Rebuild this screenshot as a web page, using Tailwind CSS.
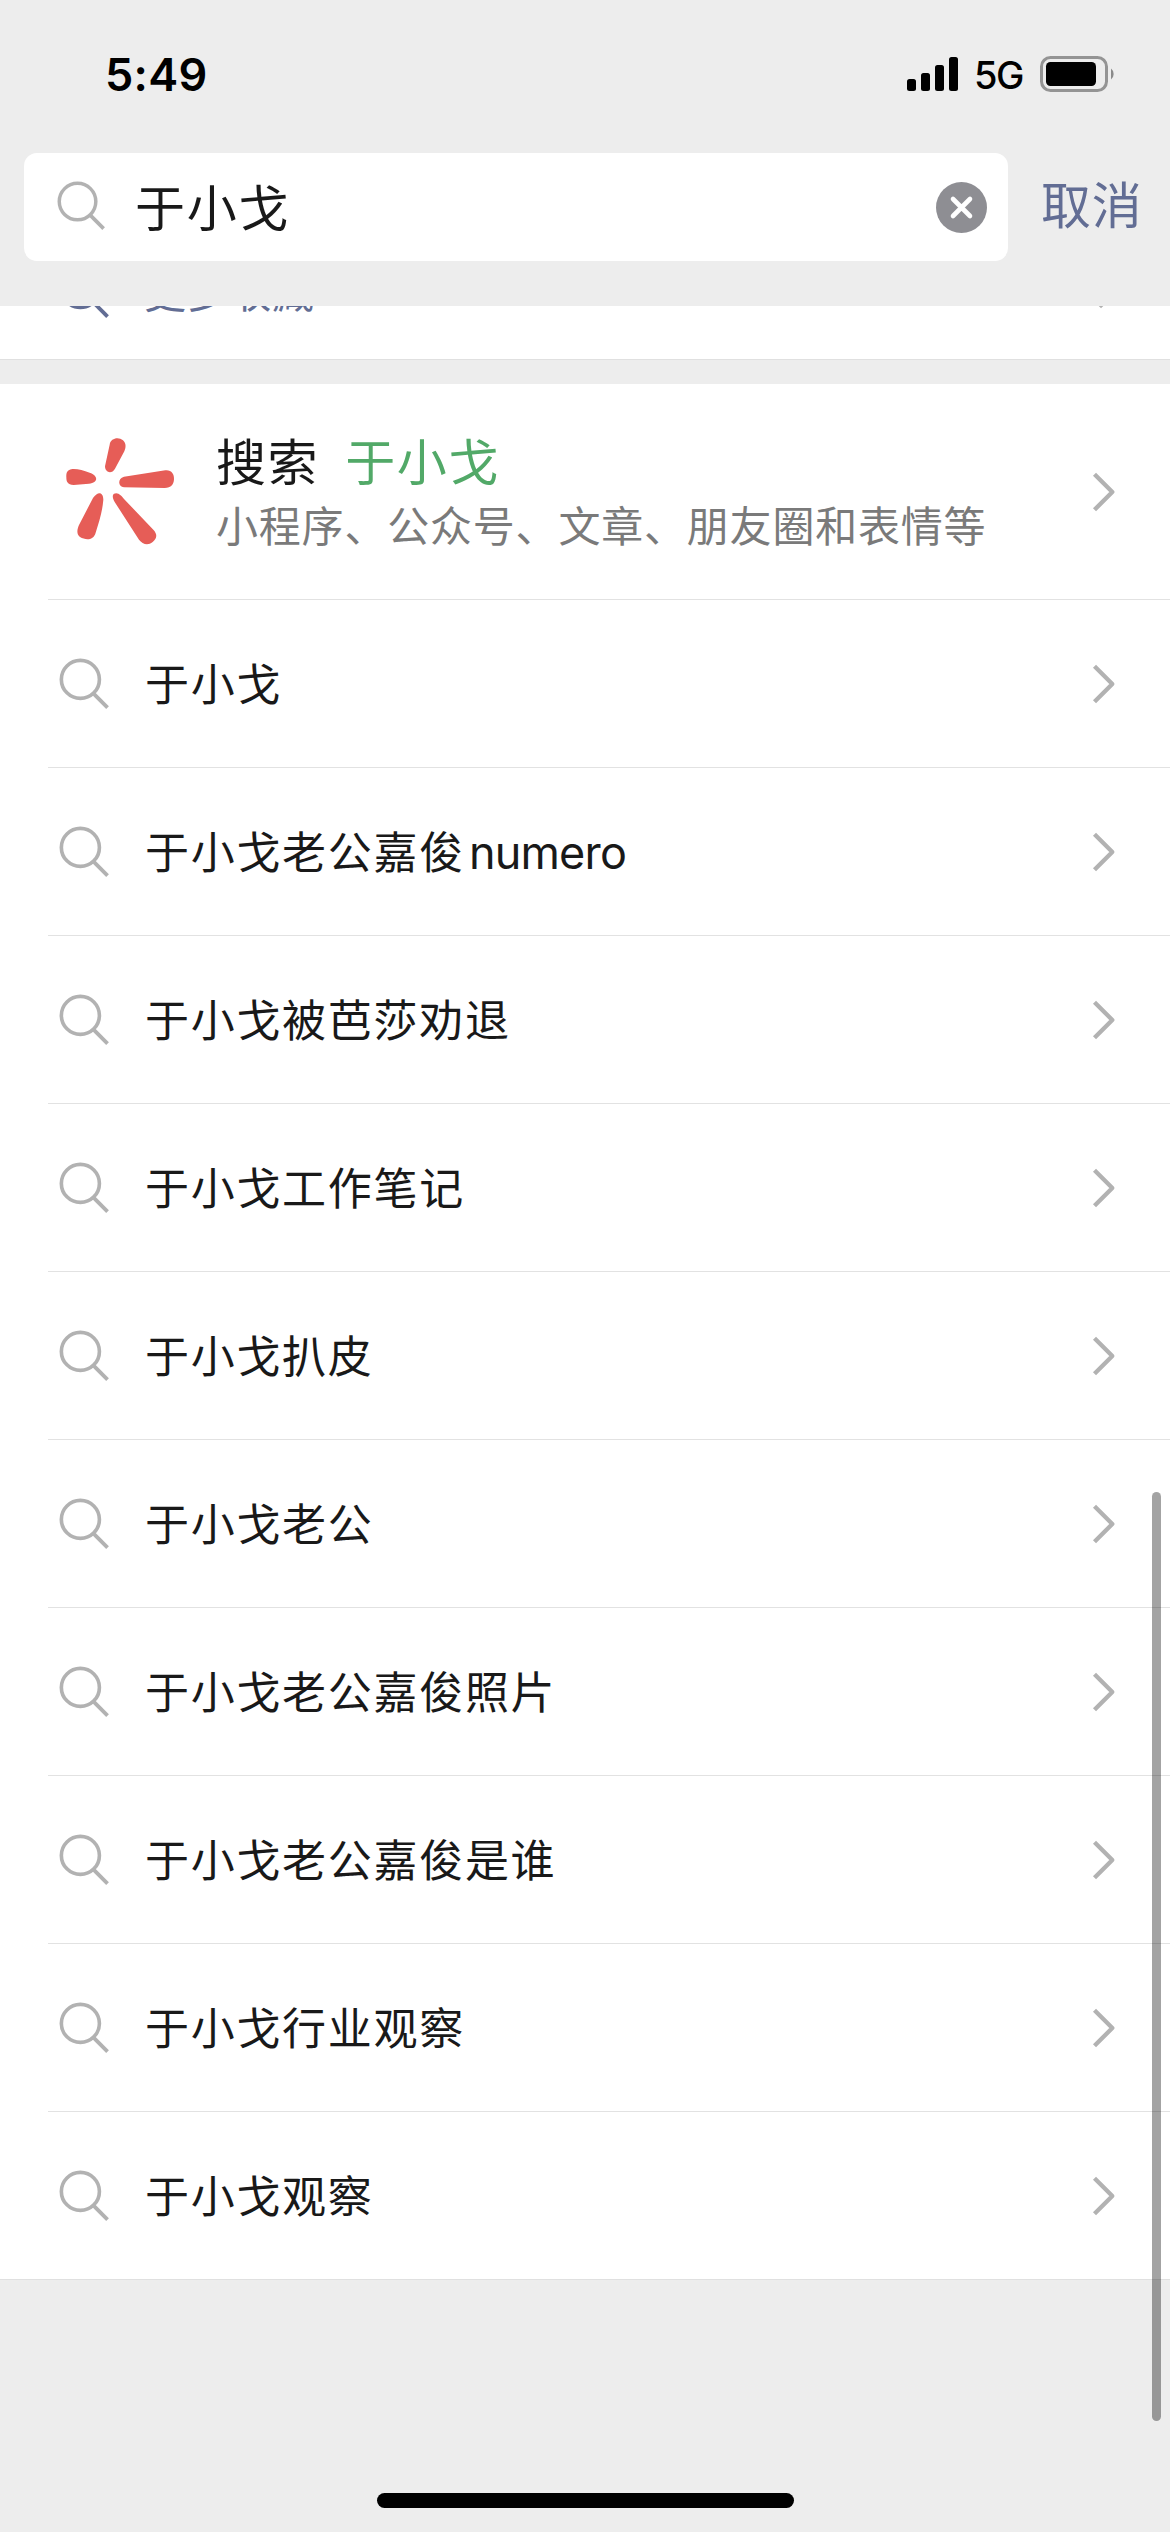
<!DOCTYPE html>
<html lang="zh-CN">
<head>
<meta charset="utf-8">
<title>搜索</title>
<script src="https://cdn.jsdelivr.net/npm/@tailwindcss/browser@4"></script>
</head>
<body class="bg-[#ededed]">
<svg class="hidden">
  <symbol id="search" viewBox="0 0 52 52"><circle cx="21.8" cy="21.8" r="19.4" fill="none" stroke="currentColor" stroke-width="3.7"/><path d="M35 36 49.500 50.500" fill="none" stroke="currentColor" stroke-width="3.9"/></symbol>
  <symbol id="chevron" viewBox="0 0 24 40"><path d="M2.500 2.200 20.300 20 2.500 37.800" fill="none" stroke="currentColor" stroke-width="4.300" stroke-linejoin="round"/></symbol>
</svg>
<div class="relative flex h-[2532px] w-[1170px] flex-col overflow-hidden bg-[#ededed] font-['Noto_Sans_CJK_SC',sans-serif] text-[#191919]">

  <!-- Status bar -->
  <div class="flex h-[153px] shrink-0 items-start pt-[56px] pl-[105px] pr-[55px] text-black">
    <div class="font-['Inter',sans-serif] text-[45px] leading-[37px] font-semibold tracking-[0.300px]">5:49</div>
    <div class="ml-auto flex h-[36px] items-center">
      <svg class="h-[36px] w-[51px]" viewBox="0 0 51 36"><rect x="0" y="23" width="9" height="12" rx="2.500"/><rect x="14" y="17" width="9" height="18" rx="2.500"/><rect x="28" y="9" width="9" height="26" rx="2.500"/><rect x="42" y="1" width="9" height="34" rx="2.500"/></svg>
      <div class="ml-[16px] w-[66px] pt-[2px] font-['Inter',sans-serif] text-[38px] leading-[36px] font-medium tracking-[-1.500px]">5G</div>
      <svg class="h-[36px] w-[75px]" viewBox="0 0 75 36"><rect x="1.500" y="1.500" width="65" height="33" rx="9" fill="none" stroke="#949494" stroke-width="3"/><rect x="6" y="6" width="50" height="24" rx="4.500"/><path d="M71 12.500a7 7 0 0 1 0 11z" fill="#8a8a8a"/></svg>
    </div>
  </div>

  <!-- Search field -->
  <div class="flex h-[153px] shrink-0 items-start pl-[24px]">
    <div class="flex h-[108px] w-[984px] items-center rounded-[13px] bg-white pl-[33px] pr-[21px]">
      <svg class="mb-[4px] h-[49px] w-[49px] text-[#b2b2b2]"><use href="#search"/></svg>
      <div class="ml-[29px] pb-[5px] text-[50px] leading-[60px] tracking-[1.800px]">于小戈</div>
      <svg class="ml-auto h-[51px] w-[51px]" viewBox="0 0 51 51"><circle cx="25.500" cy="25.500" r="25.500" fill="#8e8e93"/><path d="M17 17 34 34M34 17 17 34" stroke="#fff" stroke-width="4.600" stroke-linecap="round"/></svg>
    </div>
    <div class="ml-[33px] flex h-[98px] items-center text-[50px] leading-[60px] tracking-[0.800px] text-[#626d94]">取消</div>
  </div>

  <!-- Favourites row, scrolled under the header -->
  <div class="flex h-[53px] shrink-0 items-end overflow-hidden bg-white">
    <div class="flex h-[134px] w-full shrink-0 items-center pl-[59px] pr-[49px] text-[#626d94]">
      <svg class="h-[51px] w-[51px]"><use href="#search"/></svg>
      <div class="ml-[34px] pb-[5px] text-[42px] leading-[60px] tracking-[0.700px]">更多收藏</div>
      <svg class="mb-[6px] ml-auto h-[40px] w-[24px] text-[#b2b2b2]"><use href="#chevron"/></svg>
    </div>
  </div>
  <div class="h-[25px] shrink-0 border-t border-[#e0e0e0]"></div>

  <!-- Search entry -->
  <div class="h-[216px] shrink-0 bg-white pl-[48px]">
    <div class="flex h-full items-center border-b border-[#e2e2e2] pr-[54px]">
      <svg class="mb-[4px] ml-[-8px] h-[140px] w-[150px]" viewBox="0 0 450 420" fill="#e65d57">
        <path d="M209 74C212 54 236 50 249 61C259 70 258 83 253 94L225 146C215 164 195 157 195 139Z"/>
        <path d="M97 147C78 149 79 163 79 172C79 184 82 195 101 195L147 191C176 188 175 167 149 158C130 151 113 146 97 147Z"/>
        <path d="M252 170 376 151C394 149 403 162 402 178C401 194 394 204 374 204L252 202C234 200 232 175 252 170Z"/>
        <path d="M159 234C174 212 190 216 190 239C187 277 177 305 167 338C160 362 137 361 120 351C108 343 112 326 117 315Z"/>
        <path d="M222 221C234 215 245 227 252 237L340 329C353 343 351 355 338 366C323 378 307 372 297 359L224 246C218 236 216 226 222 221Z"/>
      </svg>
      <div class="ml-[26px]">
        <div class="text-[50px] leading-[62px] tracking-[1.600px]">搜索<span class="ml-[26px] text-[#52a968]">于小戈</span></div>
        <div class="pt-[3px] text-[42px] leading-[62px] tracking-[0.800px] text-[#7a7a7a]">小程序、公众号、文章、朋友圈和表情等</div>
      </div>
      <svg class="ml-auto h-[40px] w-[24px] text-[#b2b2b2]"><use href="#chevron"/></svg>
    </div>
  </div>

  <!-- Suggestions -->
  <div id="list" class="shrink-0 border-b border-[#e0e0e0] bg-white"></div>
  <template id="row">
    <div class="group h-[168px] pl-[48px] last:h-[167px]">
      <div class="flex h-full items-center border-b border-[#e2e2e2] pl-[11px] pr-[54px] group-last:border-0">
        <svg class="h-[51px] w-[51px] text-[#b2b2b2]"><use href="#search"/></svg>
        <div class="label ml-[35px] pb-[4px] text-[44px] leading-[60px] tracking-[1.700px]"></div>
        <svg class="ml-auto h-[40px] w-[24px] text-[#b2b2b2]"><use href="#chevron"/></svg>
      </div>
    </div>
  </template>

  <!-- Scroll indicator and home indicator -->
  <div class="absolute top-[1492px] left-[1152px] h-[929px] w-[9px] rounded-full bg-black/36"></div>
  <div class="mt-auto mb-[24px] h-[15px] w-[417px] self-center rounded-full bg-black"></div>
</div>
<script>
  const items = ['于小戈', '于小戈老公嘉俊<span class="ml-[4px] font-[\'Inter\',sans-serif] text-[45px] leading-none tracking-[-0.800px]">numero</span>', '于小戈被芭莎劝退', '于小戈工作笔记', '于小戈扒皮', '于小戈老公', '于小戈老公嘉俊照片', '于小戈老公嘉俊是谁', '于小戈行业观察', '于小戈观察'];
  const list = document.getElementById('list');
  const row = document.getElementById('row');
  for (const item of items) {
    const node = row.content.cloneNode(true);
    node.querySelector('.label').innerHTML = item;
    list.appendChild(node);
  }
</script>
</body>
</html>
